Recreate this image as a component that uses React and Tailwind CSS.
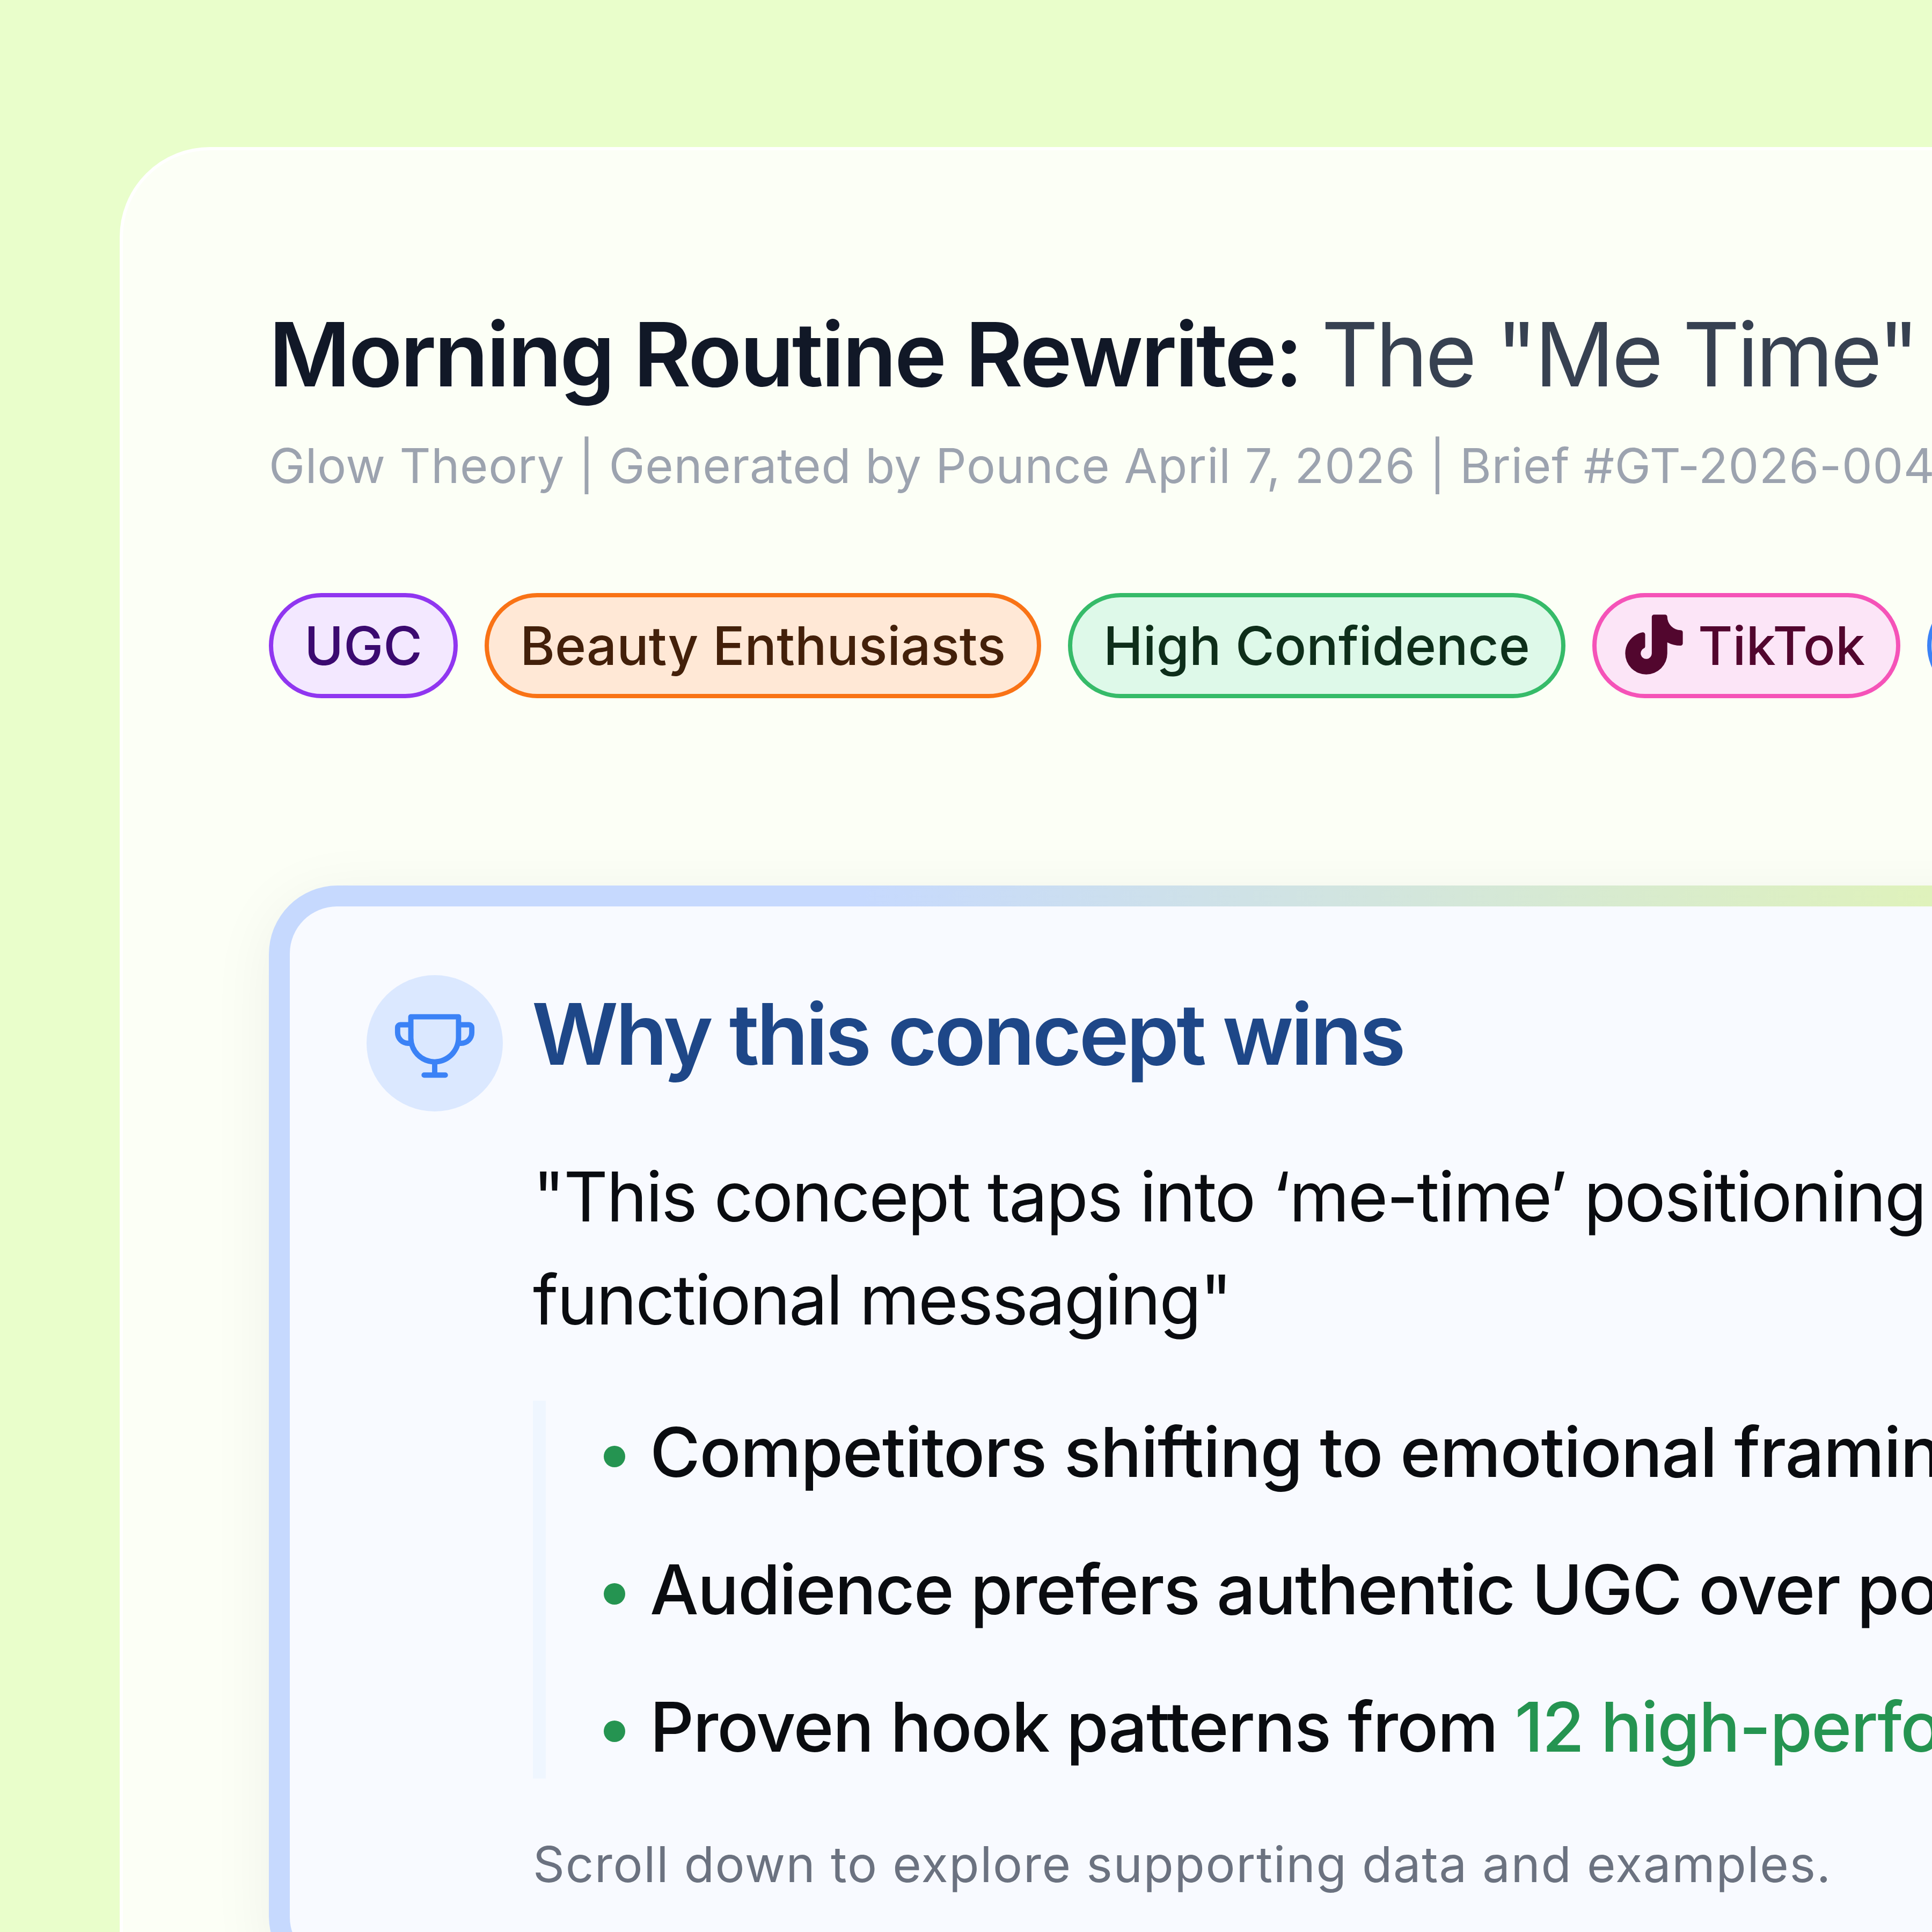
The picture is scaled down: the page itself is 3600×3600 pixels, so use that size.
import { PiTiktokLogoFill, PiTrophy } from "react-icons/pi";

const pills = [
  { label: "UGC", className: "border-[#9036f0] bg-[#f3e8ff] text-[#3b0a70]" },
  { label: "Beauty Enthusiasts", className: "border-[#f97316] bg-[#ffe8d6] text-[#43200a]" },
  { label: "High Confidence", className: "border-[#36bb69] bg-[#def9e9] text-[#0e2e1a]" },
  { label: "TikTok", className: "border-[#f553b8] bg-[#fce5f7] text-[#52062e]", icon: true },
  { label: "Instagram", className: "border-[#3b82f6] bg-[#dbeafe] text-[#172554]" },
];

const bullets = [
  <span className="tracking-[-1.3px]">Competitors shifting to emotional framing</span>,
  <span>Audience prefers authentic UGC over polished ads</span>,
  <span>
    Proven hook patterns from <span className="text-[#259451]">12 high-performing creators</span>
  </span>,
];

export default function App() {
  return (
    <div className="h-[3600px] w-[3600px] overflow-hidden bg-[#e9fecb] pl-[223px] pt-[274px] font-['Inter',sans-serif]">
      <div className="h-[4000px] w-[3800px] rounded-tl-[168px] border-[6px] border-white bg-[#fcfff6] pl-[272px] pt-[280px]">
        {/* Title block */}
        <h1 className="whitespace-nowrap text-[165px] font-semibold leading-[200px] tracking-[-3.8px] text-[#111827]">
          Morning Routine Rewrite:{" "}
          <span className="font-normal tracking-[-5.2px] text-[#374151]">The "Me Time"</span>
        </h1>
        <p className="mt-[36px] whitespace-nowrap text-[90px] leading-[144px] tracking-[0.65px] text-[#9ca3af]">
          Glow Theory | Generated by Pounce April 7, 2026 | Brief #GT-2026-004
        </p>

        {/* Pills */}
        <div className="mt-[165px] flex gap-[50px]">
          {pills.map((pill) => (
            <span
              key={pill.label}
              className={`flex h-[196px] shrink-0 items-center gap-[16px] rounded-full border-[8px] px-[58px] text-[99px] font-medium ${pill.className}`}
            >
              {pill.icon && <PiTiktokLogoFill className="ml-[-17px] h-[132px] w-[132px]" />}
              {pill.label}
            </span>
          ))}
        </div>

        {/* Why this concept wins */}
        <div className="mt-[349px] w-[3300px] rounded-[128px] bg-[linear-gradient(90deg,#c6d9fe_1100px,#dff2bb_3100px)] p-[39px] shadow-[0_20px_120px_rgba(0,0,0,0.06)]">
          <div className="h-[1971px] rounded-[88px] bg-[#f8faff] pl-[143px] pt-[128px]">
            <div className="flex gap-[54px]">
              <div className="flex h-[254px] w-[254px] shrink-0 items-center justify-center rounded-full bg-[#dbe8ff]">
                <PiTrophy className="h-[158px] w-[158px] text-[#3b82f6]" />
              </div>
              <h2 className="whitespace-nowrap text-[158px] font-semibold leading-[220px] tracking-[-5.1px] text-[#1e4788]">
                Why this concept wins
              </h2>
            </div>
            <div className="ml-[310px] mt-[63px]">
              <p className="whitespace-nowrap text-[128px] leading-[192px] tracking-[-2.5px] text-[#0a0c10]">
                "This concept taps into ‘me-time’ positioning over purely
                <br />
                functional messaging"
              </p>
              <ul className="mt-[92px] flex flex-col gap-[64px] border-l-[24px] border-[#eff6ff] pl-[108px] text-[128px] font-medium leading-[192px] tracking-[-1.92px] text-[#0a0c10]">
                {bullets.map((bullet, i) => (
                  <li key={i} className="flex gap-[46px] whitespace-nowrap">
                    <span className="mt-[84px] h-[40px] w-[40px] shrink-0 rounded-full bg-[#259451]" />
                    {bullet}
                  </li>
                ))}
              </ul>
              <p className="mt-[88px] whitespace-nowrap text-[92px] leading-[144px] tracking-[1.62px] text-[#6b7280]">
                Scroll down to explore supporting data and examples.
              </p>
            </div>
          </div>
        </div>
      </div>
    </div>
  );
}
